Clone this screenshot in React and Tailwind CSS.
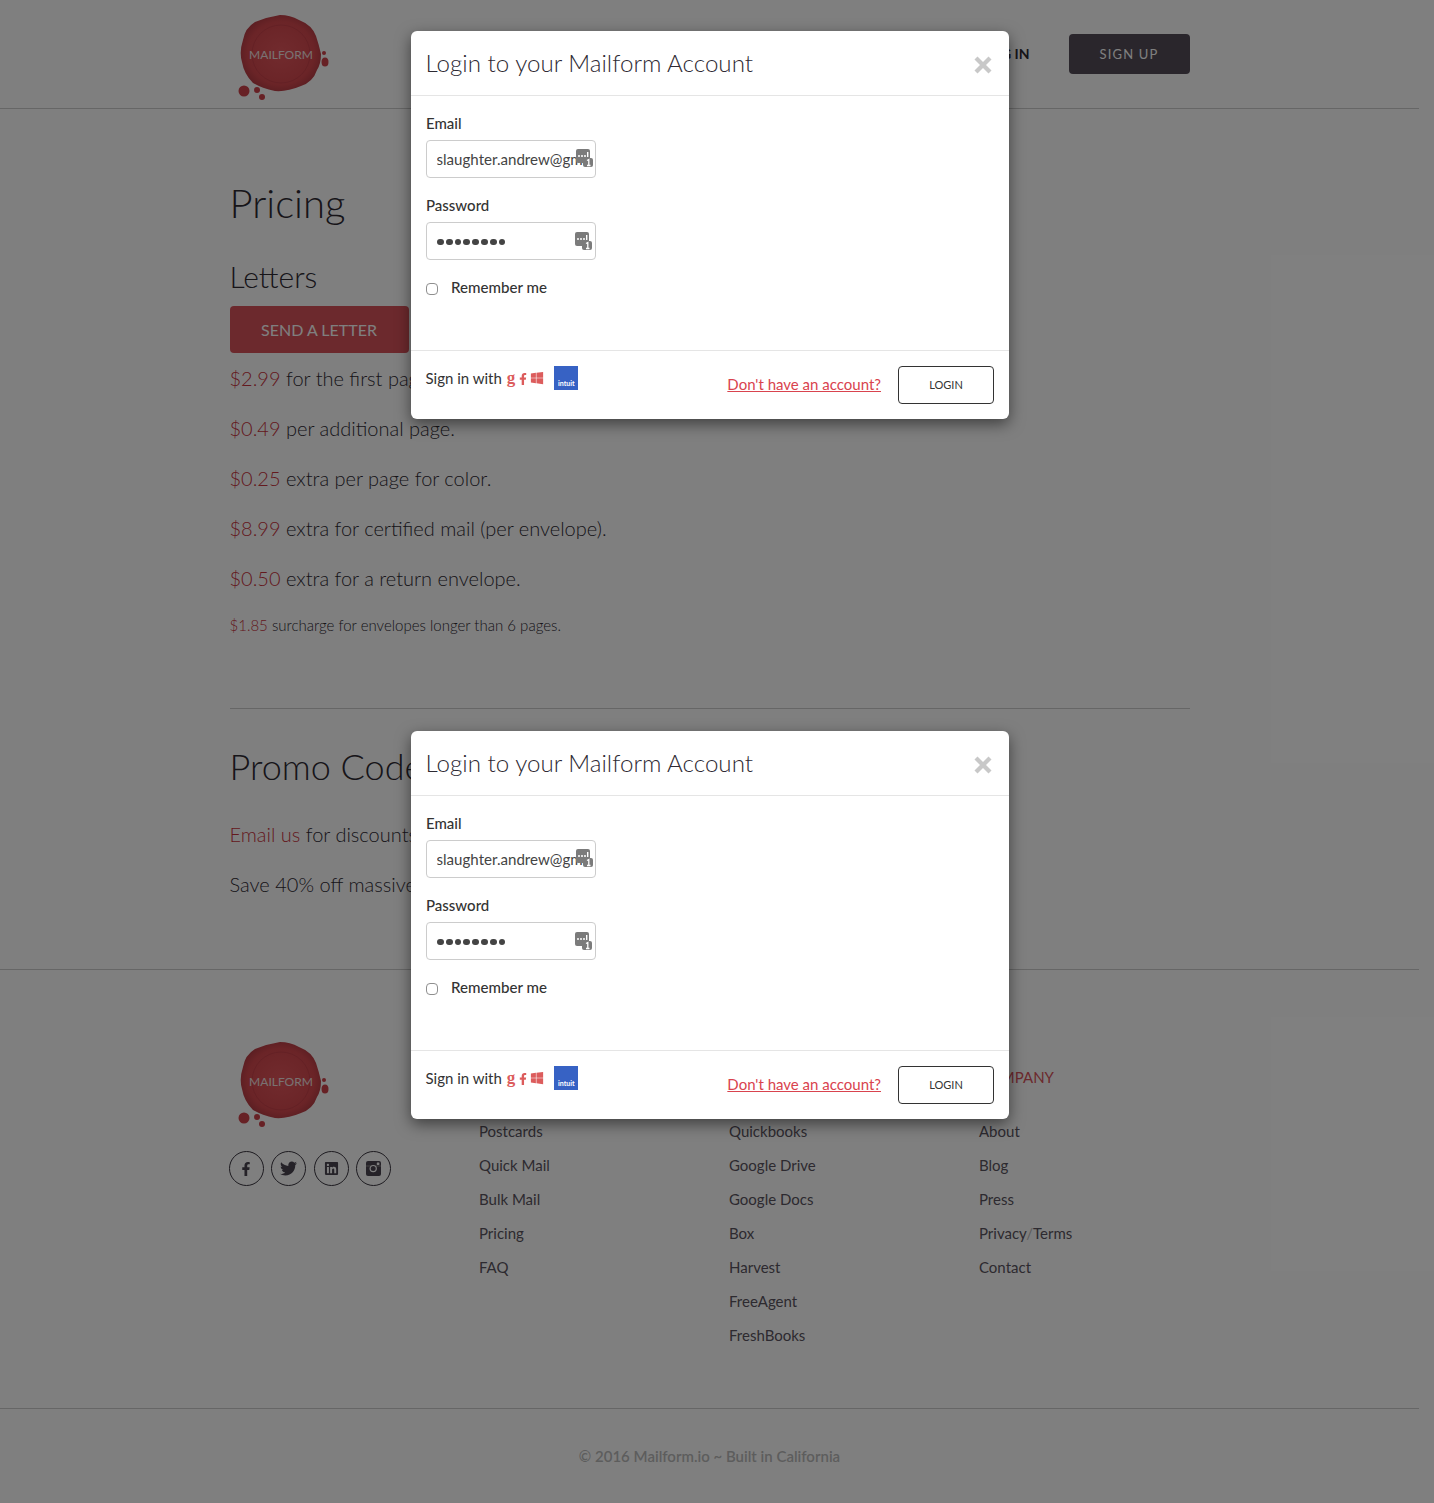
import { FaFacebookF, FaTwitter, FaLinkedin, FaWindows } from "react-icons/fa";
import { X } from "lucide-react";

const lato = { fontFamily: "Lato, sans-serif" };

function Seal({ id }) {
  return (
    <svg width="96" height="92" viewBox="0 0 96 92" className="block">
      <defs>
        <radialGradient id={id} cx="50%" cy="50%" r="55%">
          <stop offset="0%" stopColor="#e4565c" />
          <stop offset="75%" stopColor="#d6494f" />
          <stop offset="100%" stopColor="#b03a42" />
        </radialGradient>
      </defs>
      <path
        d="M45 3 Q55 3 64 8 Q77 13 81 24 Q84 33 86 42 Q86 52 82 58 Q78 70 66 74 Q52 80 40 79 Q26 76 18 71 Q9 62 7 50 Q4 40 8 28 Q10 16 20 10 Q32 5 45 3Z"
        fill={`url(#${id})`}
      />
      <circle cx="46" cy="42" r="29" fill="none" stroke="#c9424b" strokeWidth="1" />
      <circle cx="9" cy="79" r="5.5" fill="#cf424a" />
      <circle cx="22" cy="78" r="3" fill="#cf424a" />
      <circle cx="27" cy="85" r="3" fill="#cf424a" />
      <circle cx="89" cy="41" r="2" fill="#cf424a" />
      <ellipse cx="90" cy="50" rx="3.5" ry="4.5" fill="#cf424a" />
      <text x="46" y="46.5" textAnchor="middle" fontSize="12" fill="#f3e4e4" fontFamily="Lato, sans-serif">
        MAILFORM
      </text>
    </svg>
  );
}

function KeyIcon() {
  return (
    <svg width="17" height="18" viewBox="0 0 17 18" className="absolute right-[3px] top-[9px]">
      <rect x="0" y="0" width="14" height="14" rx="2" fill="#7b7b7b" />
      <circle cx="3" cy="7" r="1" fill="#fff" />
      <circle cx="6" cy="7" r="1" fill="#fff" />
      <circle cx="9" cy="7" r="1" fill="#fff" />
      <rect x="11" y="3" width="1.4" height="5" fill="#fff" />
      <rect x="7" y="9" width="10" height="9" rx="2" fill="#7b7b7b" />
      <path d="M11 11.5 L12.8 10.5 L12.8 16.5 M11 16.5 H14.5" stroke="#fff" strokeWidth="1.3" fill="none" />
    </svg>
  );
}

function InstagramIcon() {
  return (
    <svg width="15" height="15" viewBox="0 0 15 15">
      <rect width="15" height="15" rx="2" fill="currentColor" />
      <rect x="0" y="4.5" width="15" height="1" fill="#8a8a8a" />
      <circle cx="7.2" cy="7.6" r="3.1" fill="currentColor" stroke="#fff" strokeWidth="1.2" />
      <rect x="10.8" y="1.6" width="2.6" height="2.4" rx="0.4" fill="#fff" />
    </svg>
  );
}

function LoginModal({ className }) {
  return (
    <div
      style={lato}
      className={`absolute left-[411px] w-[598px] h-[388px] rounded-md bg-white flex flex-col shadow-[0_5px_15px_rgba(0,0,0,0.5)] ${className}`}
    >
      <div className="h-[65px] border-b border-[#e5e5e5] px-[15px] flex items-center justify-between shrink-0">
        <h4 className="text-[24.15px] font-light text-[#2e2a33] -ml-[0.5px]">Login to your Mailform Account</h4>
        <X size={28} strokeWidth={3.6} strokeLinecap="butt" className="text-[#c8c8c8] -mr-[3px] mt-[3px]" />
      </div>
      <div className="flex-1 px-[15px] pt-[16px]">
        <label className="block text-[15px] leading-[22px] font-medium text-[#333]">Email</label>
        <div className="relative w-[170px] h-[38px] mt-[6px]">
          <input
            readOnly
            value="slaughter.andrew@gmail.com"
            className="w-full h-full border border-[#ccc] rounded pl-[9.5px] pr-[10px] text-[15.1px] text-[#444] outline-none"
          />
          <KeyIcon />
        </div>
        <label className="block mt-[16px] text-[15px] leading-[22px] font-medium text-[#333]">Password</label>
        <div className="relative w-[170px] h-[38px] mt-[6px] border border-[#ccc] rounded flex items-center pl-[10px] gap-[2px]">
          {[0, 1, 2, 3, 4, 5, 6, 7].map((i) => (
            <span key={i} className="w-[6.8px] h-[6.8px] rounded-full bg-[#444] mt-[2px]" />
          ))}
          <KeyIcon />
        </div>
        <div className="flex items-center mt-[16px] h-[22px]">
          <span className="w-[12px] h-[12px] border border-[#8f8f8f] rounded-sm bg-white mt-[3px]" />
          <span className="ml-[13px] text-[15.1px] font-medium text-[#333]">Remember me</span>
        </div>
      </div>
      <div className="h-[69px] border-t border-[#e5e5e5] px-[15px] flex justify-between shrink-0">
        <div className="flex items-start pt-[14px]">
          <span className="text-[15px] leading-[26px] text-[#333] -ml-[0.5px]">Sign in with</span>
          <span className="ml-[5px] text-[17px] leading-[26px] text-[#dc5c5c] font-bold" style={{ fontFamily: "'Liberation Serif', serif" }}>g</span>
          <FaFacebookF size={12} className="ml-[2px] mt-[8px] text-[#dc5c5c]" />
          <FaWindows size={14} className="ml-[1px] mt-[6px] text-[#dc5c5c]" />
          <div className="ml-[10px] mt-[1px] w-[24px] h-[24px] bg-[#3762c4] flex items-end justify-center pb-[2px] text-[7px] leading-[9px] font-bold text-white">
            intuit
          </div>
        </div>
        <div className="flex items-center gap-[17px] pb-[1px]">
          <a className="text-[15px] text-[#d9434e] underline whitespace-nowrap">Don't have an account?</a>
          <button className="w-[96px] h-[38px] pt-[1px] shrink-0 rounded border border-[#333] bg-white text-[11px] text-[#333]">LOGIN</button>
        </div>
      </div>
    </div>
  );
}

function Price({ amount, children }) {
  return (
    <p className="text-[20px] leading-[28px] font-light text-[#2e2a33] mb-[22px]">
      <span className="text-[#c8323c]">{amount}</span> {children}
    </p>
  );
}

function FooterCol({ title, links }) {
  return (
    <div className="w-[250px] shrink-0">
      <h5 className="text-[15px] leading-[20px] text-[#d9535b] uppercase mb-[27px]">{title}</h5>
      <ul>
        {links.map((l, i) => (
          <li key={i} className="text-[15px] leading-[34px] text-[#5a5460]">{l}</li>
        ))}
      </ul>
    </div>
  );
}

function SocialIcon({ children }) {
  return (
    <div className="w-[35px] h-[35px] rounded-full border border-[#3a3640] flex items-center justify-center text-[#4a4450]">
      {children}
    </div>
  );
}

export default function App() {
  return (
    <div style={lato} className="relative w-[1434px] h-[1503px] bg-white overflow-hidden">
      <div className="w-[1419px]">
        <header className="h-[109px] border-b border-[#ccc]">
          <div className="w-[960px] mx-auto h-full flex items-start justify-between">
            <div className="mt-[12px] ml-[5px]">
              <Seal id="seal-top" />
            </div>
            <nav className="flex items-center gap-[39px] mt-[34px]">
              <a className="text-[14px] font-bold text-[#2e2a33] -mt-[1px]">LOG IN</a>
              <button className="w-[121px] h-[40px] pt-[1px] rounded bg-[#544c58] text-white text-[13px] tracking-[1.2px]">SIGN UP</button>
            </nav>
          </div>
        </header>

        <main className="w-[960px] mx-auto">
          <h1 className="mt-[66px] text-[40px] leading-[56px] font-light text-[#2e2a33]">Pricing</h1>
          <h2 className="mt-[27px] text-[30px] leading-[36px] font-light text-[#2e2a33]">Letters</h2>
          <button className="mt-[12px] w-[179px] h-[47px] rounded bg-[#d9535b] text-white text-[16px] block">SEND A LETTER</button>
          <div className="mt-[11px]">
            <Price amount="$2.99">for the first page.</Price>
            <Price amount="$0.49">per additional page.</Price>
            <Price amount="$0.25">extra per page for color.</Price>
            <Price amount="$8.99">extra for certified mail (per envelope).</Price>
            <Price amount="$0.50">extra for a return envelope.</Price>
          </div>
          <p className="text-[15px] leading-[22px] font-light text-[#2e2a33]">
            <span className="text-[#c8323c]">$1.85</span> surcharge for envelopes longer than 6 pages.
          </p>
          <div className="mt-[72px] border-t border-[#ccc]" />
          <h2 className="mt-[31px] text-[36px] leading-[52px] font-light text-[#2e2a33]">Promo Codes</h2>
          <p className="mt-[28px] text-[20px] leading-[28px] font-light text-[#2e2a33]">
            <span className="text-[#c8323c]">Email us</span> for discounts on large mailings.
          </p>
          <p className="mt-[22px] text-[20px] leading-[28px] font-light text-[#2e2a33]">Save 40% off massive mailings.</p>
        </main>

        <footer className="mt-[71px] border-t border-[#ccc]">
          <div className="w-[960px] mx-auto flex h-[438px]">
            <div className="w-[250px] shrink-0">
              <div className="mt-[69px] ml-[5px]">
                <Seal id="seal-bottom" />
              </div>
              <div className="mt-[20px] flex gap-[7.67px] -ml-[1px]">
                <SocialIcon><FaFacebookF size={14} /></SocialIcon>
                <SocialIcon><FaTwitter size={17} /></SocialIcon>
                <SocialIcon><FaLinkedin size={15} /></SocialIcon>
                <SocialIcon><InstagramIcon /></SocialIcon>
              </div>
            </div>
            <div className="flex mt-[97px] -ml-[0.5px]">
              <FooterCol title="Products" links={["Postcards", "Quick Mail", "Bulk Mail", "Pricing", "FAQ"]} />
              <FooterCol title="Integrations" links={["Quickbooks", "Google Drive", "Google Docs", "Box", "Harvest", "FreeAgent", "FreshBooks"]} />
              <FooterCol
                title="Company"
                links={[
                  "About",
                  "Blog",
                  "Press",
                  <>Privacy<span className="text-[#bbb]">/</span>Terms</>,
                  "Contact",
                ]}
              />
            </div>
          </div>
          <div className="border-t border-[#ccc] pt-[36px] text-center text-[15px] leading-[22px] font-semibold text-[#bbb]">
            © 2016 Mailform.io ~ Built in California
          </div>
        </footer>
      </div>

      <div className="absolute inset-0 bg-black/50" />
      <LoginModal className="top-[31px]" />
      <LoginModal className="top-[731px]" />
    </div>
  );
}
